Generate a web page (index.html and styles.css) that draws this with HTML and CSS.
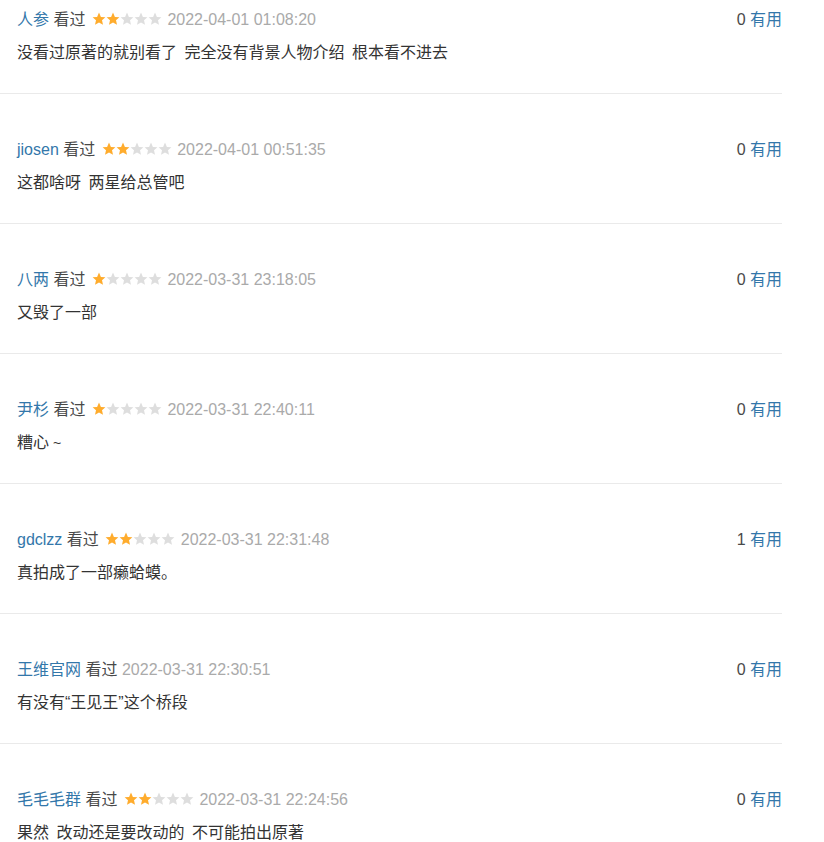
FILE: index.html
```html
<!DOCTYPE html>
<html lang="zh-CN">
<head>
<meta charset="utf-8">
<title>短评</title>
<link rel="stylesheet" href="styles.css">
</head>
<body>
<svg width="0" height="0" class="defs">
  <defs>
    <polygon id="star" points="7,0.6 8.9,4.9 13.4,5.3 10,8.3 11,12.8 7,10.5 3,12.8 4,8.3 0.6,5.3 5.1,4.9"/>
  </defs>
</svg>
<div class="list">
  <div class="item">
    <div class="head">
      <div class="info"><a class="user">人参</a> <span class="seen">看过</span> <svg class="stars" viewBox="0 0 70 14"><use href="#star" x="0" class="on"/><use href="#star" x="14" class="on"/><use href="#star" x="28" class="off"/><use href="#star" x="42" class="off"/><use href="#star" x="56" class="off"/></svg> <span class="time">2022-04-01 01:08:20</span></div>
      <div class="vote"><span class="count">0</span> <a class="useful">有用</a></div>
    </div>
    <p class="short">没看过原著的就别看了 完全没有背景人物介绍 根本看不进去</p>
  </div>
  <div class="item">
    <div class="head">
      <div class="info"><a class="user">jiosen</a> <span class="seen">看过</span> <svg class="stars" viewBox="0 0 70 14"><use href="#star" x="0" class="on"/><use href="#star" x="14" class="on"/><use href="#star" x="28" class="off"/><use href="#star" x="42" class="off"/><use href="#star" x="56" class="off"/></svg> <span class="time">2022-04-01 00:51:35</span></div>
      <div class="vote"><span class="count">0</span> <a class="useful">有用</a></div>
    </div>
    <p class="short">这都啥呀 两星给总管吧</p>
  </div>
  <div class="item">
    <div class="head">
      <div class="info"><a class="user">八两</a> <span class="seen">看过</span> <svg class="stars" viewBox="0 0 70 14"><use href="#star" x="0" class="on"/><use href="#star" x="14" class="off"/><use href="#star" x="28" class="off"/><use href="#star" x="42" class="off"/><use href="#star" x="56" class="off"/></svg> <span class="time">2022-03-31 23:18:05</span></div>
      <div class="vote"><span class="count">0</span> <a class="useful">有用</a></div>
    </div>
    <p class="short">又毁了一部</p>
  </div>
  <div class="item">
    <div class="head">
      <div class="info"><a class="user">尹杉</a> <span class="seen">看过</span> <svg class="stars" viewBox="0 0 70 14"><use href="#star" x="0" class="on"/><use href="#star" x="14" class="off"/><use href="#star" x="28" class="off"/><use href="#star" x="42" class="off"/><use href="#star" x="56" class="off"/></svg> <span class="time">2022-03-31 22:40:11</span></div>
      <div class="vote"><span class="count">0</span> <a class="useful">有用</a></div>
    </div>
    <p class="short">糟心<span class="tilde">~</span></p>
  </div>
  <div class="item">
    <div class="head">
      <div class="info"><a class="user">gdclzz</a> <span class="seen">看过</span> <svg class="stars" viewBox="0 0 70 14"><use href="#star" x="0" class="on"/><use href="#star" x="14" class="on"/><use href="#star" x="28" class="off"/><use href="#star" x="42" class="off"/><use href="#star" x="56" class="off"/></svg> <span class="time">2022-03-31 22:31:48</span></div>
      <div class="vote"><span class="count">1</span> <a class="useful">有用</a></div>
    </div>
    <p class="short">真拍成了一部癞蛤蟆。</p>
  </div>
  <div class="item">
    <div class="head">
      <div class="info"><a class="user">王维官网</a> <span class="seen">看过</span> <span class="time">2022-03-31 22:30:51</span></div>
      <div class="vote"><span class="count">0</span> <a class="useful">有用</a></div>
    </div>
    <p class="short">有没有“王见王”这个桥段</p>
  </div>
  <div class="item">
    <div class="head">
      <div class="info"><a class="user">毛毛毛群</a> <span class="seen">看过</span> <svg class="stars" viewBox="0 0 70 14"><use href="#star" x="0" class="on"/><use href="#star" x="14" class="on"/><use href="#star" x="28" class="off"/><use href="#star" x="42" class="off"/><use href="#star" x="56" class="off"/></svg> <span class="time">2022-03-31 22:24:56</span></div>
      <div class="vote"><span class="count">0</span> <a class="useful">有用</a></div>
    </div>
    <p class="short">果然 改动还是要改动的 不可能拍出原著</p>
  </div>
</div>
</body>
</html>
```
FILE: styles.css
```css
html, body {
  margin: 0;
  padding: 0;
  background: #fff;
}
body {
  font-family: "Liberation Sans", Arial, "Noto Sans CJK SC", sans-serif;
  font-size: 16px;
  color: #333;
}
.defs {
  position: absolute;
  width: 0;
  height: 0;
}
.list {
  width: 782px;
}
.item {
  padding: 45px 0 29px 17px;
  border-bottom: 1px solid #eaeaea;
}
.item:first-child {
  padding-top: 9px;
}
.head {
  display: flex;
  justify-content: space-between;
  align-items: center;
  height: 22px;
  line-height: 22px;
}
.info {
  white-space: nowrap;
}
.user {
  color: #3377aa;
  text-decoration: none;
}
.seen {
  color: #494949;
}
.stars {
  width: 70px;
  height: 14px;
  vertical-align: -1px;
  margin: 0 1px 0 2px;
}
.stars .on {
  fill: #ffac2d;
}
.stars .off {
  fill: #dedede;
}
.time {
  color: #aaa;
}
.vote {
  white-space: nowrap;
}
.count {
  color: #494949;
}
.useful {
  color: #3377aa;
  text-decoration: none;
}
.short {
  margin: 11px 0 0;
  line-height: 22px;
  color: #333;
  word-spacing: 3px;
}
.tilde {
  margin-left: 4px;
  font-size: 14px;
}
```
